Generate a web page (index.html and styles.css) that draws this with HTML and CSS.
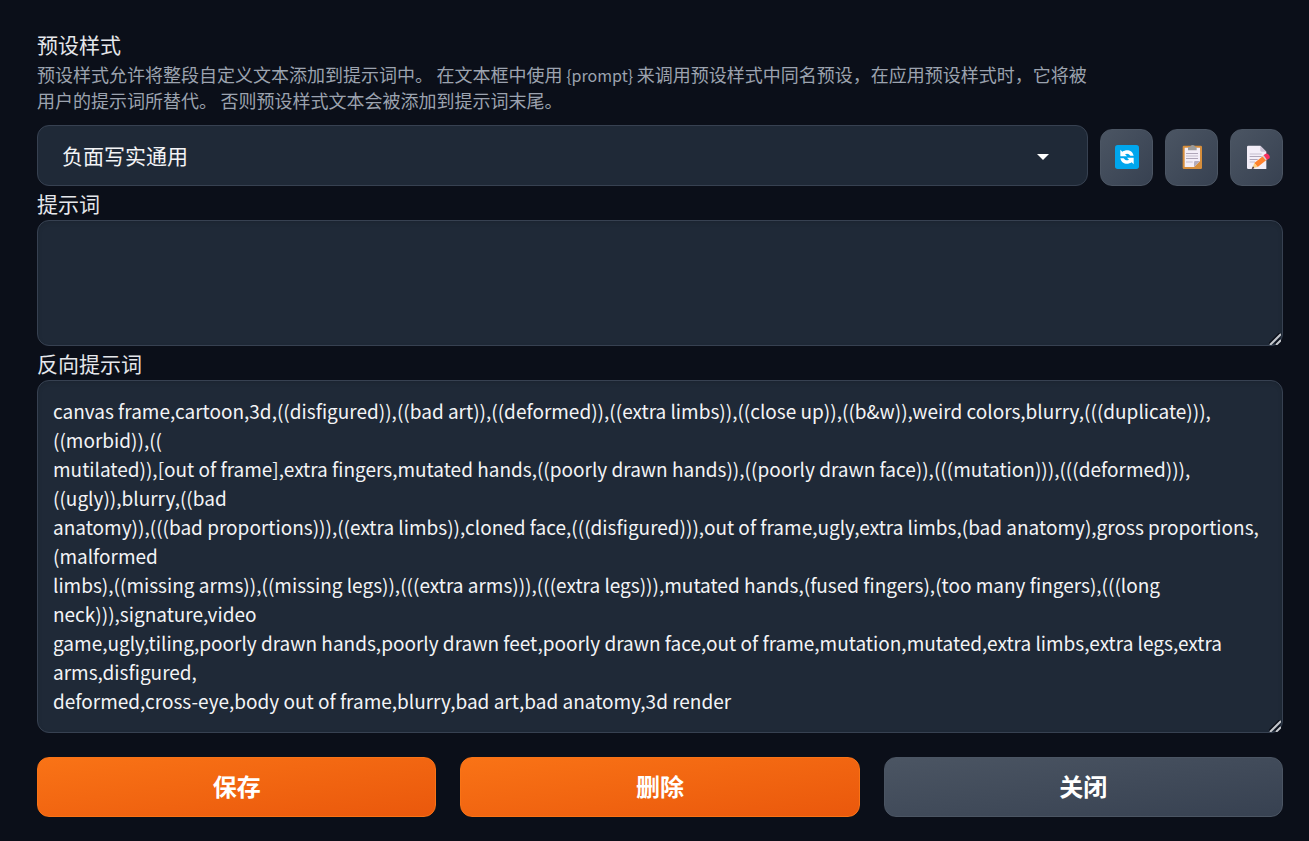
FILE: index.html
```
<!DOCTYPE html>
<html lang="zh-CN">
<head>
  <meta charset="UTF-8">
  <meta name="viewport" content="width=device-width, initial-scale=1.0">
  <title>预设样式</title>
  <link rel="stylesheet" href="styles.css">
</head>
<body>
  <main class="editor">
    <div class="style-row">
      <div class="style-select">
        <label for="styleName">预设样式</label>
        <p class="info">预设样式允许将整段自定义文本添加到提示词中。<span class="latin"> </span>在文本框中使用<span class="latin"> {prompt} </span>来调用预设样式中同名预设，在应用预设样式时，它将被用户的提示词所替代。<span class="latin"> </span>否则预设样式文本会被添加到提示词末尾。</p>
        <div class="dropdown">
          <select id="styleName">
            <option>负面写实通用</option>
          </select>
          <svg class="arrow" viewBox="0 0 12 6" aria-hidden="true"><path d="M0 0h12L6 6z"/></svg>
        </div>
      </div>
      <button class="tool" aria-label="刷新">
        <svg viewBox="0 0 36 36">
          <rect width="36" height="36" rx="4" fill="#00a6ed"/>
          <path fill="#fff" d="M8 7l3 3c6-4 15-3 17 6h-5c-2-3-5-4-8-2l3 3H8z"/>
          <path fill="#fff" d="M28 29l-3-3c-6 4-15 3-17-6h5c2 3 5 4 8 2l-3-3h10z"/>
        </svg>
      </button>
      <button class="tool" aria-label="粘贴">
        <svg viewBox="0 0 36 36">
          <rect x="4" y="1" width="29" height="35" rx="2" fill="#d68e3c"/>
          <path fill="#f3eef8" d="M7 4h23v20l-9 9H7z"/>
          <path fill="#b4acbc" d="M30 24l-9 9v-7q0-2 2-2z"/>
          <path fill="#998ea4" d="M9 12h18v1H9zM9 16h18v1H9zM9 20h18v1H9zM9 25h10v1H9z"/>
          <path fill="#9b9b9b" d="M12 3h3q1-3 4-3t4 3h2v5H12z"/>
        </svg>
      </button>
      <button class="tool" aria-label="编辑">
        <svg viewBox="0 0 36 36">
          <path fill="#f3eef8" d="M5 1h18l9 9v26H5q-2 0-2-2V3q0-2 2-2z"/>
          <path fill="#cdc4d6" d="M23 1l9 9h-7q-2 0-2-2z"/>
          <path fill="#998ea4" d="M7 13h18v1H7zM7 17h18v1H7zM7 21h12v1H7zM7 25h8v1H7z"/>
          <path fill="#ff822d" d="M14 27l15-12 5 6-15 12z"/>
          <path fill="#ffce7c" d="M14 27l5 6-8 2z"/>
          <path fill="#402a32" d="M12 32l2 3-4 1z"/>
          <path fill="#d3d3d3" d="M26 17l2-2 5 6-2 2z"/>
          <path fill="#f92f60" d="M28 15l3-2q3-1 5 2t1 5l-4 2z"/>
        </svg>
      </button>
    </div>

    <label for="prompt">提示词</label>
    <div class="text-box">
      <textarea id="prompt" class="prompt"></textarea>
      <svg class="grip" viewBox="0 0 12 12" aria-hidden="true">
        <path class="grip-shadow" d="M0 11L11 0M6 11l5-5"/>
        <path class="grip-line" d="M1 12L12 1M7 12l5-5"/>
      </svg>
    </div>

    <label for="negative">反向提示词</label>
    <div class="text-box">
      <textarea id="negative" class="negative" spellcheck="false">canvas frame,cartoon,3d,((disfigured)),((bad art)),((deformed)),((extra limbs)),((close up)),((b&amp;w)),weird colors,blurry,(((duplicate))),((morbid)),((
mutilated)),[out of frame],extra fingers,mutated hands,((poorly drawn hands)),((poorly drawn face)),(((mutation))),(((deformed))),((ugly)),blurry,((bad
anatomy)),(((bad proportions))),((extra limbs)),cloned face,(((disfigured))),out of frame,ugly,extra limbs,(bad anatomy),gross proportions,(malformed
limbs),((missing arms)),((missing legs)),(((extra arms))),(((extra legs))),mutated hands,(fused fingers),(too many fingers),(((long neck))),signature,video
game,ugly,tiling,poorly drawn hands,poorly drawn feet,poorly drawn face,out of frame,mutation,mutated,extra limbs,extra legs,extra arms,disfigured,
deformed,cross-eye,body out of frame,blurry,bad art,bad anatomy,3d render</textarea>
      <svg class="grip" viewBox="0 0 12 12" aria-hidden="true">
        <path class="grip-shadow" d="M0 11L11 0M6 11l5-5"/>
        <path class="grip-line" d="M1 12L12 1M7 12l5-5"/>
      </svg>
    </div>

    <div class="actions">
      <button class="primary">保存</button>
      <button class="primary">删除</button>
      <button class="secondary">关闭</button>
    </div>
  </main>
</body>
</html>
```
FILE: styles.css
```
* {
  box-sizing: border-box;
}
body {
  margin: 0;
  background: #0b0f19;
  color: #f3f4f6;
  font-family: "Noto Sans CJK SC", "Liberation Sans", sans-serif;
}
button, select, textarea {
  font-family: inherit;
  color: inherit;
}
.editor {
  padding: 27px 26px 22px 37px;
}
label {
  display: block;
  color: #e5e7eb;
  font-size: 21px;
  line-height: 34px;
}
.style-row {
  display: flex;
  align-items: flex-end;
  gap: 12px;
}
.style-select {
  flex: 1;
}
.info {
  margin: 0 0 12px;
  color: #9ca3af;
  font-size: 18px;
  line-height: 26px;
}
.latin {
  font-size: 16px;
  line-height: 16px;
}
.dropdown {
  position: relative;
}
.dropdown select {
  display: block;
  width: 100%;
  height: 61px;
  padding: 0 24px 2px;
  appearance: none;
  background: #1f2937;
  border: 1px solid #374151;
  border-radius: 12px;
  font-size: 21px;
}
.arrow {
  position: absolute;
  top: 29px;
  right: 39px;
  width: 12px;
  height: 6px;
  fill: #fff;
  pointer-events: none;
}
.tool {
  display: flex;
  align-items: center;
  justify-content: center;
  width: 53px;
  height: 57px;
  padding: 0 0 2px;
  background: linear-gradient(to bottom right, #4b5563, #374151);
  border: 1px solid #4b5563;
  border-radius: 12px;
}
.tool svg {
  width: 24px;
  height: 24px;
  overflow: visible;
}
.text-box {
  position: relative;
}
textarea {
  display: block;
  width: 100%;
  padding: 15px;
  background: #1f2937;
  border: 1px solid #374151;
  border-radius: 12px;
  box-shadow: inset 0 2px 4px rgba(0, 0, 0, 0.1);
  font-size: 19px;
  line-height: 29px;
  resize: vertical;
}
textarea::-webkit-resizer {
  background: transparent;
}
.grip {
  position: absolute;
  right: 2px;
  bottom: 1px;
  width: 12px;
  height: 12px;
  fill: none;
  stroke-width: 2;
  pointer-events: none;
}
.grip-shadow {
  stroke: #0b0f19;
}
.grip-line {
  stroke: #c4c7cc;
}
.prompt {
  height: 126px;
}
.negative {
  height: 353px;
}
.actions {
  display: flex;
  gap: 24px;
  margin-top: 24px;
}
.actions button {
  flex: 1;
  height: 60px;
  padding: 0 0 4px;
  border-radius: 12px;
  color: #fff;
  font-size: 24px;
  font-weight: 700;
}
.primary {
  background: linear-gradient(to bottom right, #f97316, #ea580c);
  border: 1px solid #f97316;
}
.secondary {
  background: linear-gradient(to bottom right, #4b5563, #374151);
  border: 1px solid #4b5563;
}
```
